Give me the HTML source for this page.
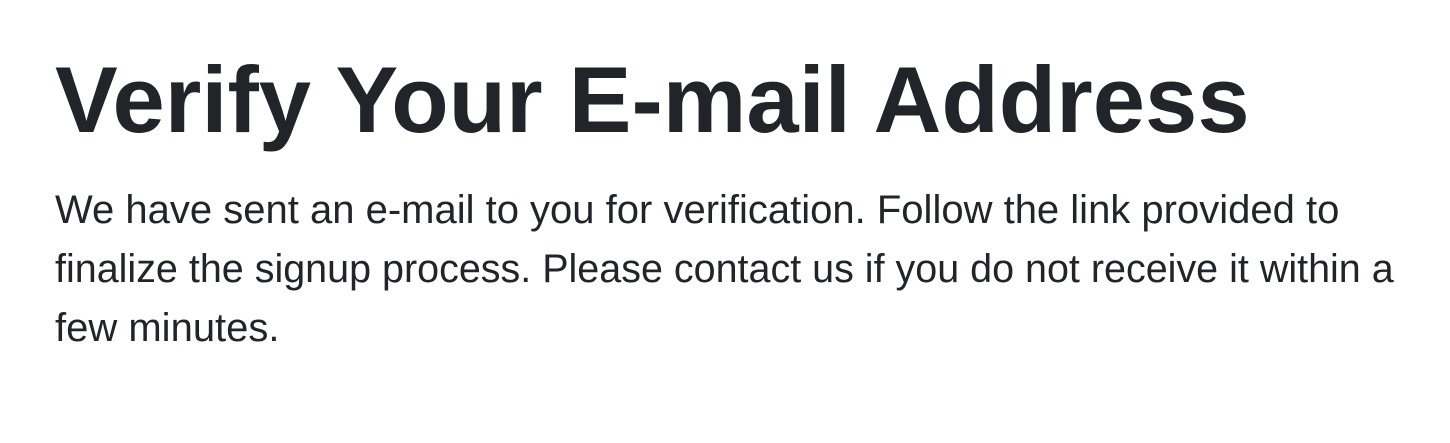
<!DOCTYPE html>
<html><head><meta charset="utf-8"><style>
html,body{margin:0;padding:0;background:#fff;width:1450px;height:443px;overflow:hidden}
body{font-family:"Liberation Sans","DejaVu Sans",sans-serif;color:#212529}
h1{position:absolute;left:55px;top:40px;margin:0;font-size:94px;font-weight:bold;line-height:120px;white-space:nowrap}
p{position:absolute;left:55px;top:181px;margin:0;font-size:40px;line-height:59px;white-space:nowrap}
p span{display:block;transform-origin:0 0}
p span.l2{transform:scaleX(0.987)}
</style></head><body>
<h1>Verify Your E-mail Address</h1>
<p><span>We have sent an e-mail to you for verification. Follow the link provided to</span><span class="l2">finalize the signup process. Please contact us if you do not receive it within a</span><span>few minutes.</span></p>
</body></html>
